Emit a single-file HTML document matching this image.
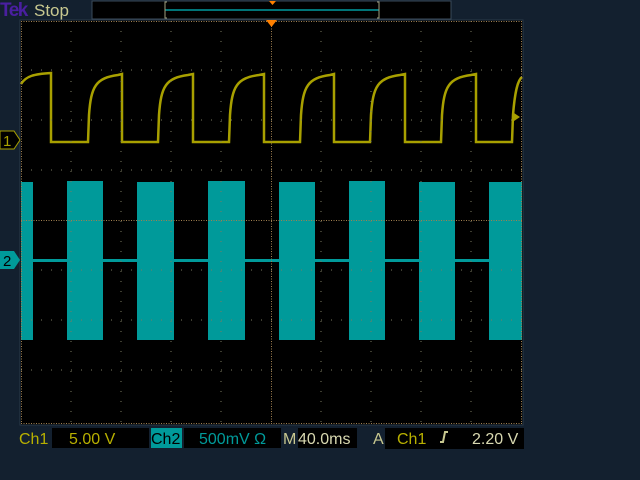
<!DOCTYPE html>
<html><head><style>
html,body{margin:0;padding:0;background:#13202f;width:640px;height:480px;overflow:hidden;font-family:"Liberation Mono","DejaVu Sans Mono",monospace;}
</style></head><body>
<svg width="640" height="480" xmlns="http://www.w3.org/2000/svg" style="position:absolute;left:0;top:0">
<rect width="640" height="480" fill="#13202f"/>
<text x="0" y="16" font-family="Liberation Sans,sans-serif" font-size="19" fill="#4a1fa0" font-weight="bold" letter-spacing="-1.5">Tek</text>
<text x="34" y="16" font-family="Liberation Sans,sans-serif" font-size="17" fill="#c8c890">Stop</text>
<rect x="92" y="1" width="359" height="18" fill="#000" stroke="#3a4a5a"/>
<line x1="165" y1="10" x2="379" y2="10" stroke="#009aa0" stroke-width="1.5"/>
<path d="M167,2 h-2 v16 h2 M377,2 h2 v16 h-2" stroke="#a0a080" fill="none"/>
<path d="M269,1 h7 l-3.5,4z" fill="#ff8000"/>
<rect x="20" y="20" width="503" height="405" fill="#000" stroke="#2a3a4a"/>
<g fill="#009a9a">
<rect x="21" y="182" width="12" height="158"/>
<rect x="67" y="181" width="36" height="159"/>
<rect x="137" y="182" width="37" height="158"/>
<rect x="208" y="181" width="37" height="159"/>
<rect x="279" y="182" width="36" height="158"/>
<rect x="349" y="181" width="36" height="159"/>
<rect x="419" y="182" width="36" height="158"/>
<rect x="489" y="182" width="33" height="158"/>
</g>
<line x1="21" y1="260.5" x2="522" y2="260.5" stroke="#009a9a" stroke-width="3"/>
<path fill="none" stroke="#a8a000" stroke-width="2.5" d="
M21,84 C26,76 34,74 51,73 L51,142 L88,142 L89,115 C91,86 96,78 118,75 L122,74 L122,142 L158,142 L159,115 C161,86 166,78 188,75 L193,74 L193,142 L229,142 L230,115 C232,86 237,78 259,75 L264,74 L264,142 L300,142 L301,115 C303,86 308,78 330,75 L334,74 L334,142 L370,142 L371,115 C373,86 378,78 400,75 L405,74 L405,142 L441,142 L442,115 C444,86 449,78 471,75 L476,74 L476,142 L512,142 L513,115 C515,90 518,80 522,77"/>
<g stroke="#7a7a60" stroke-width="1" stroke-dasharray="1,9">
<line x1="21" y1="70" x2="522" y2="70"/><line x1="21" y1="120" x2="522" y2="120"/>
<line x1="21" y1="170" x2="522" y2="170"/><line x1="21" y1="270" x2="522" y2="270"/>
<line x1="21" y1="320" x2="522" y2="320"/><line x1="21" y1="370" x2="522" y2="370"/>
<line x1="71" y1="21" x2="71" y2="424"/><line x1="121" y1="21" x2="121" y2="424"/>
<line x1="171" y1="21" x2="171" y2="424"/><line x1="221" y1="21" x2="221" y2="424"/>
<line x1="321" y1="21" x2="321" y2="424"/><line x1="371" y1="21" x2="371" y2="424"/>
<line x1="421" y1="21" x2="421" y2="424"/><line x1="471" y1="21" x2="471" y2="424"/>
</g>
<g stroke="#a08050" stroke-width="1" stroke-dasharray="1,1.5">
<line x1="21" y1="220.5" x2="522" y2="220.5"/>
<line x1="271.5" y1="21" x2="271.5" y2="424"/>
<line x1="21" y1="21.5" x2="522" y2="21.5"/><line x1="21" y1="423.5" x2="522" y2="423.5"/>
<line x1="21.5" y1="21" x2="21.5" y2="424"/><line x1="521.5" y1="21" x2="521.5" y2="424"/>
</g>
<path d="M266,20 h11 l-5.5,7z" fill="#ff8000"/>
<path d="M520,117 l-6,-4 v8z" fill="#a8a000"/>
<path d="M0,131 h14 l6,9 l-6,9 h-14z" fill="#000" stroke="#a8a000"/>
<text x="3" y="146" font-family="Liberation Sans,sans-serif" font-size="15" fill="#a8a000">1</text>
<path d="M0,251 h14 l6,9 l-6,9 h-14z" fill="#009a9a"/>
<text x="3" y="266" font-family="Liberation Sans,sans-serif" font-size="15" fill="#000">2</text>
<g font-family="Liberation Sans,sans-serif" font-size="16">
<text x="19" y="444" fill="#b8b000">Ch1</text>
<rect x="52" y="428" width="97" height="20" fill="#000"/>
<text x="69" y="444" fill="#b8b000">5.00 V</text>
<rect x="151" y="428" width="31" height="20" fill="#009a9a"/>
<text x="151" y="444" fill="#000">Ch2</text>
<rect x="184" y="428" width="97" height="20" fill="#000"/>
<text x="199" y="444" fill="#009a9a">500mV Ω</text>
<text x="283" y="444" fill="#c8c890">M</text>
<rect x="298" y="428" width="59" height="20" fill="#000"/>
<text x="298" y="444" fill="#d8d8b0">40.0ms</text>
<text x="373" y="444" fill="#c8c890">A</text>
<rect x="385" y="428" width="139" height="21" fill="#000"/>
<text x="397" y="444" fill="#b8b000">Ch1</text>
<path d="M440,442 h3 l2,-10 h3" stroke="#c8c890" stroke-width="2" fill="none"/>
<text x="472" y="444" fill="#d8d8b0">2.20 V</text>
</g>
</svg>
</body></html>
